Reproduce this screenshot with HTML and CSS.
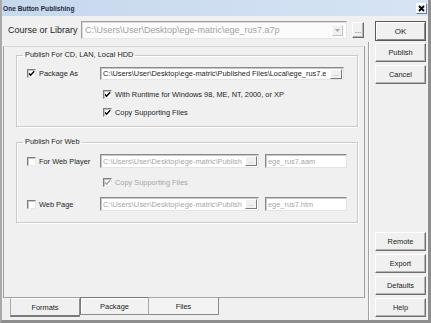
FILE: index.html
```html
<!DOCTYPE html>
<html>
<head>
<meta charset="utf-8">
<title>One Button Publishing</title>
<link rel="stylesheet" href="styles.css">
</head>
<body>
<div class="win">
  <div class="title">
    <span class="title-text">One Button Publishing</span>
    <span class="close"><svg width="7" height="7" viewBox="0 0 7 7"><path d="M1 1 L6 6 M6 1 L1 6" stroke="#000" stroke-width="1.8"/></svg></span>
  </div>
  <div class="client">
    <div class="left">
      <div class="course">
        <span class="course-label">Course or Library</span>
        <div class="combo">
          <span class="combo-text">C:\Users\User\Desktop\ege-matric\ege_rus7.a7p</span>
          <span class="combo-arrow"><svg width="5" height="3" viewBox="0 0 5 3"><path d="M0 0 H5 L2.5 3 Z" fill="#a8a8a8"/></svg></span>
        </div>
        <div class="btn dots"><span class="dots-text">...</span></div>
      </div>
      <div class="panel">
        <fieldset class="group g1">
          <legend>Publish For CD, LAN, Local HDD</legend>
          <div class="row r-pkg">
            <div class="cb-cell"><span class="cb checked"></span><span class="lbl">Package As</span></div>
            <div class="input w-pkg"><span class="itext">C:\Users\User\Desktop\ege-matric\Published Files\Local\ege_rus7.e</span><span class="ibtn">...</span></div>
          </div>
          <div class="row sub r-run">
            <span class="cb checked"></span><span class="lbl">With Runtime for Windows 98, ME, NT, 2000, or XP</span>
          </div>
          <div class="row sub r-copy">
            <span class="cb checked"></span><span class="lbl">Copy Supporting Files</span>
          </div>
        </fieldset>
        <fieldset class="group g2">
          <legend>Publish For Web</legend>
          <div class="row r-player">
            <div class="cb-cell"><span class="cb"></span><span class="lbl">For Web Player</span></div>
            <div class="input dis w-path"><span class="itext">C:\Users\User\Desktop\ege-matric\Publish</span><span class="ibtn">...</span></div>
            <div class="input dis w-name"><span class="itext">ege_rus7.aam</span></div>
          </div>
          <div class="row sub r-copy2">
            <span class="cb checked dis"></span><span class="lbl dis-text">Copy Supporting Files</span>
          </div>
          <div class="row r-page">
            <div class="cb-cell"><span class="cb"></span><span class="lbl">Web Page</span></div>
            <div class="input dis w-path"><span class="itext">C:\Users\User\Desktop\ege-matric\Publish</span><span class="ibtn">...</span></div>
            <div class="input dis w-name"><span class="itext">ege_rus7.htm</span></div>
          </div>
        </fieldset>
      </div>
      <div class="tabs">
        <div class="tab tab-formats">Formats</div>
        <div class="tab tab-package">Package</div>
        <div class="tab tab-files">Files</div>
      </div>
    </div>
    <div class="right">
      <div class="btn rbtn ok">OK</div>
      <div class="rpanel">
        <div class="btn rbtn">Publish</div>
        <div class="btn rbtn">Cancel</div>
        <div class="spacer"></div>
        <div class="btn rbtn">Remote</div>
        <div class="btn rbtn">Export</div>
        <div class="btn rbtn">Defaults</div>
        <div class="btn rbtn">Help</div>
      </div>
    </div>
  </div>
</div>
</body>
</html>
```

FILE: styles.css
```css
html, body {
  margin: 0;
  padding: 0;
  background: #f0f0f0;
}
body {
  font-family: "Liberation Sans", Arial, sans-serif;
  font-size: 7.4px;
  color: #1c1c1c;
}
.win {
  width: 431px;
  height: 323px;
  box-sizing: border-box;
  display: flex;
  flex-direction: column;
  background: #f0f0f0;
  border-left: 2px solid #a9a9a9;
  border-right: 3px solid #8e8e8e;
  border-bottom: 3px solid #8e8e8e;
  overflow: hidden;
}
.title {
  height: 16px;
  flex: none;
  display: flex;
  align-items: center;
  justify-content: space-between;
  padding: 0 1px 0 1px;
  background: linear-gradient(to right, #c6d8ed, #d6e4f4);
}
.title-text {
  font-weight: bold;
  font-size: 6.6px;
  color: #1e2a3c;
}
.close {
  width: 11px;
  height: 11px;
  box-sizing: border-box;
  background: #f3f5f8;
  border: 1px solid;
  border-color: #ffffff #6f7b8c #6f7b8c #ffffff;
  display: flex;
  align-items: center;
  justify-content: center;
}
.client {
  flex: 1;
  display: flex;
  min-height: 0;
}
.left {
  width: 363px;
  display: flex;
  flex-direction: column;
}
.course {
  height: 30px;
  flex: none;
  box-sizing: border-box;
  display: flex;
  align-items: flex-start;
  padding: 5px 0 0 6px;
}
.course-label {
  width: 73px;
  font-size: 9px;
  line-height: 18px;
  white-space: nowrap;
}
.combo {
  width: 266px;
  height: 18px;
  box-sizing: border-box;
  border: 1px solid;
  border-color: #a0a0a0 #e6e6e6 #e6e6e6 #a0a0a0;
  box-shadow: inset 1px 1px 0 #dadada;
  background: #fbfbfb;
  display: flex;
  align-items: center;
  justify-content: space-between;
  padding: 0 3px 0 3px;
}
.combo-text {
  font-size: 9px;
  color: #a3a3a3;
  white-space: nowrap;
}
.combo-arrow {
  width: 11px;
  height: 11px;
  box-sizing: border-box;
  border: 1px solid;
  border-color: #f8f8f8 #c4c4c4 #c4c4c4 #f8f8f8;
  background: #f0f0f0;
  display: flex;
  align-items: center;
  justify-content: center;
}
.btn {
  box-sizing: border-box;
  background: #f0f0f0;
  border: 1px solid;
  border-color: #ffffff #6e6e6e #6e6e6e #ffffff;
  box-shadow: inset -1px -1px 0 #b4b4b4;
  display: flex;
  align-items: center;
  justify-content: center;
  white-space: nowrap;
}
.dots {
  width: 12px;
  height: 16px;
  margin: 1px 0 0 5px;
  align-items: flex-end;
  padding-bottom: 3px;
}
.dots-text {
  display: block;
  font-size: 8px;
  line-height: 6px;
  color: #444444;
}
.panel {
  height: 252px;
  flex: none;
  box-sizing: border-box;
  margin-left: 1px;
  border: 1px solid;
  border-color: #d6d6d6 #a0a0a0 #a0a0a0 #a0a0a0;
  padding: 3px 0 0 12px;
}
.group {
  width: 342px;
  box-sizing: border-box;
  margin: 0;
  padding: 0 0 0 10px;
  border: 1px solid #cacaca;
  box-shadow: 1px 1px 0 #ffffff, inset 1px 1px 0 #ffffff;
  min-inline-size: 0;
}
.group legend {
  margin-left: -4px;
  padding: 0 2px;
  line-height: 10px;
  font-size: 7.4px;
  white-space: nowrap;
}
.g1 {
  height: 77px;
  padding-top: 7px;
}
.g2 {
  margin-top: 10px;
  height: 86px;
  padding-top: 7px;
}
.row {
  display: flex;
  align-items: center;
  white-space: nowrap;
}
.row.sub {
  height: 12px;
  padding-left: 76px;
}
.r-pkg { height: 13px; }
.r-run { margin-top: 8px; }
.r-copy { margin-top: 6px; }
.r-player { height: 14px; }
.r-copy2 { margin-top: 8px; }
.r-page { height: 14px; margin-top: 9px; }
.cb-cell {
  width: 73px;
  display: flex;
  align-items: center;
}
.cb {
  width: 9px;
  height: 9px;
  flex: none;
  box-sizing: border-box;
  border: 1px solid;
  border-color: #7d7d7d #e8e8e8 #e8e8e8 #7d7d7d;
  box-shadow: inset 1px 1px 0 #c4c4c4;
  background: #fff;
  margin-right: 3px;
}
.cb.checked {
  background: #fff url("data:image/svg+xml,%3Csvg xmlns='http://www.w3.org/2000/svg' width='7' height='7' viewBox='0 0 7 7'%3E%3Cpath d='M0.8 3.2 L2.6 5.2 L6.2 1.2' fill='none' stroke='%23000' stroke-width='1.4'/%3E%3C/svg%3E") center / 7px 7px no-repeat;
}
.cb.checked.dis {
  background: #fff url("data:image/svg+xml,%3Csvg xmlns='http://www.w3.org/2000/svg' width='7' height='7' viewBox='0 0 7 7'%3E%3Cpath d='M0.8 3.2 L2.6 5.2 L6.2 1.2' fill='none' stroke='%23a0a0a0' stroke-width='1.4'/%3E%3C/svg%3E") center / 7px 7px no-repeat;
}
.lbl {
  font-size: 7.4px;
}
.dis-text {
  color: #a6a6a6;
}
.input {
  height: 13px;
  box-sizing: border-box;
  border: 1px solid;
  border-color: #8a8a8a #e4e4e4 #e4e4e4 #8a8a8a;
  box-shadow: inset 1px 1px 0 #c8c8c8;
  background: #fff;
  display: flex;
  align-items: center;
  justify-content: space-between;
  padding: 0 1px 0 2px;
  overflow: hidden;
}
.itext {
  font-size: 7.4px;
  white-space: nowrap;
  overflow: hidden;
}
.input.dis .itext {
  color: #a6a6a6;
}
.ibtn {
  width: 12px;
  height: 10px;
  flex: none;
  box-sizing: border-box;
  background: #f0f0f0;
  border: 1px solid;
  border-color: #ffffff #7a7a7a #7a7a7a #ffffff;
  font-size: 6px;
  color: #6a6a6a;
  display: flex;
  align-items: flex-end;
  justify-content: center;
  line-height: 6px;
  padding-bottom: 1px;
}
.input.dis .ibtn { color: #a6a6a6; }
.w-pkg { width: 244px; }
.w-path { width: 159px; height: 14px; }
.w-name { width: 82px; height: 14px; margin-left: 6px; }
.tabs {
  height: 22px;
  flex: none;
  display: flex;
  align-items: flex-start;
  padding-left: 8px;
}
.tab {
  box-sizing: border-box;
  display: flex;
  align-items: center;
  justify-content: center;
  font-size: 7.4px;
}
.tab-formats {
  width: 70px;
  height: 19px;
  border: 1px solid;
  border-color: #ffffff #8c8c8c #7a7a7a #a8a8a8;
  border-bottom-width: 2px;
  background: #f0f0f0;
  padding-top: 1px;
}
.tab-package {
  width: 69px;
  height: 18px;
  margin-top: -1px;
  border: 1px solid;
  border-color: #7a7a7a #8a8a8a #8a8a8a #7a7a7a;
  box-shadow: inset 1px 1px 0 #ffffff;
  background: #f2f2f2;
}
.tab-files {
  width: 71px;
  height: 18px;
  margin-top: -1px;
  margin-left: -1px;
  border: 1px solid;
  border-color: #a8a8a8 #8a8a8a #8a8a8a #a8a8a8;
  background: #f3f3f3;
}
.right {
  width: 63px;
  display: flex;
  flex-direction: column;
}
.rbtn {
  width: 51px;
  height: 18px;
  font-size: 7.4px;
  flex: none;
}
.ok {
  height: 20px;
  margin: 5px 0 0 10px;
  border: 1px solid #5a5a5a;
  box-shadow: inset 1px 1px 0 #ffffff, inset -1px -1px 0 #8a8a8a;
  font-size: 8px;
}
.rpanel {
  flex: 1;
  margin: 1px 0 0 3px;
  border-left: 1px solid #a0a0a0;
  box-shadow: inset 1px 0 0 #ffffff;
  display: flex;
  flex-direction: column;
  gap: 3px;
  padding: 1px 0 3px 6px;
}
.rpanel .rbtn { height: 19px; }
.spacer { flex: 1; }
```
